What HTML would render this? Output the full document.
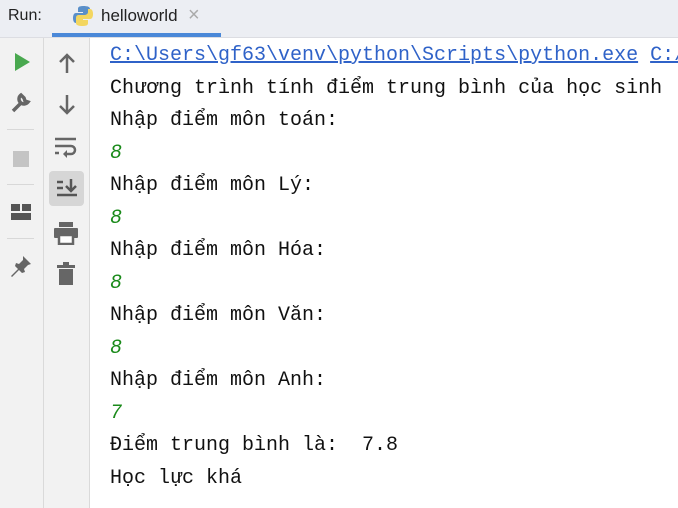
<!DOCTYPE html>
<html><head><meta charset="utf-8"><style>
body{margin:0;width:678px;height:508px;overflow:hidden;background:#fff;position:relative;font-family:"Liberation Sans",sans-serif}
.hdr{position:absolute;left:0;top:0;width:678px;height:37px;background:#eceef3;border-bottom:1px solid #dcdde2}
.run{position:absolute;left:8px;top:7px;font-size:16px;color:#222}
.tab{position:absolute;left:52px;top:0;width:169px;height:37px}
.tab .u{position:absolute;left:0;bottom:0;width:169px;height:4px;background:#4a88d8}
.tab .t{position:absolute;left:49px;top:6px;font-size:17px;color:#222}
.tab .x{position:absolute;left:136px;top:4px;font-size:20px;color:#aaa}
.c1{position:absolute;left:0;top:38px;width:43px;height:470px;background:#f2f2f2;border-right:1px solid #dadada}
.c2{position:absolute;left:44px;top:38px;width:45px;height:470px;background:#f2f2f2;border-right:1px solid #dadada}
.sep{position:absolute;left:7px;width:27px;height:1px;background:#d8d8d8}
.out{position:absolute;left:110px;top:40px;font-family:"Liberation Mono",monospace;font-size:20px;line-height:32.5px;color:#111;white-space:pre}
.lnk{color:#2f62c8;text-decoration:underline}
.g{color:#1a8a1a;font-style:italic}
svg{position:absolute}
</style></head><body>
<div class="hdr">
<div class="run">Run:</div>
<div class="tab">
<svg style="left:20px;top:5px" width="22" height="22" viewBox="0 0 22 22"><path d="M11 1c-5 0-5 2-5 3v3h5v1H4c-2 0-3 2-3 5s1 5 3 5h2v-3c0-2 2-3 4-3h5c2 0 3-1 3-3V4c0-2-2-3-7-3z" fill="#5a8fc9"/><path d="M11 21c5 0 5-2 5-3v-3h-5v-1h7c2 0 3-2 3-5s-1-5-3-5h-2v3c0 2-2 3-4 3H7c-2 0-3 1-3 3v5c0 2 2 3 7 3z" fill="#f3d660"/></svg>
<div class="t">helloworld</div><div class="x">×</div>
<div class="u"></div></div>
</div>
<div class="c1">
<svg style="left:12px;top:14px" width="20" height="20"><path d="M3 1L18 10L3 19Z" fill="#49a84f"/></svg>
<svg style="left:10px;top:54px" width="22" height="22"><path d="M3 19L12 10M11 3a5 5 0 1 0 7 7l-3-1-1-3z" stroke="#666" stroke-width="3.5" fill="none"/></svg>
<div class="sep" style="top:91px"></div>
<div style="position:absolute;left:13px;top:113px;width:16px;height:16px;background:#c4c4c4"></div>
<div class="sep" style="top:146px"></div>
<svg style="left:11px;top:166px" width="20" height="16"><rect x="0" y="0" width="9" height="7" fill="#555"/><rect x="11" y="0" width="9" height="7" fill="#555"/><rect x="0" y="9" width="20" height="7" fill="#555"/></svg>
<div class="sep" style="top:200px"></div>
<svg style="left:9px;top:216px" width="24" height="24"><path d="M14 2l8 8-3 1-4 4 1 3-3 1-3-3-7 7-1-1 7-7-3-3 1-3 3 1 4-4z" fill="#666"/></svg>
</div>
<div class="c2">
<svg style="left:13px;top:14px" width="20" height="22"><path d="M10 21V3M3 10l7-7 7 7" stroke="#666" stroke-width="2.5" fill="none"/></svg>
<svg style="left:13px;top:56px" width="20" height="22"><path d="M10 1v18M3 12l7 7 7-7" stroke="#666" stroke-width="2.5" fill="none"/></svg>
<svg style="left:10px;top:99px" width="24" height="22"><path d="M1 2h21M1 9h16a4 4 0 0 1 0 8h-6M1 16h4" stroke="#666" stroke-width="2.5" fill="none"/><path d="M9 17l4-4v8z" fill="#666"/></svg>
<div style="position:absolute;left:5px;top:133px;width:35px;height:35px;background:#d6d6d6;border-radius:4px"></div>
<svg style="left:12px;top:140px" width="22" height="22"><path d="M1 4h6M1 10h6M1 17h20M15 1v12M10 8l5 5 5-5" stroke="#555" stroke-width="2.5" fill="none"/></svg>
<svg style="left:10px;top:183px" width="24" height="24"><rect x="5" y="1" width="14" height="5" fill="#666"/><rect x="0" y="7" width="24" height="10" rx="1" fill="#666"/><rect x="5" y="14" width="14" height="9" fill="#fff" stroke="#666" stroke-width="2.5"/></svg>
<svg style="left:13px;top:224px" width="18" height="24"><rect x="0" y="3" width="18" height="3" fill="#666"/><rect x="6" y="0" width="6" height="3" fill="#666"/><rect x="2" y="7" width="14" height="16" fill="#666"/></svg>
</div>
<div class="out"><span class="lnk">C:\Users\gf63\venv\python\Scripts\python.exe</span> <span class="lnk">C:/</span>
Chương trình tính điểm trung bình của học sinh
Nhập điểm môn toán:
<span class="g">8</span>
Nhập điểm môn Lý:
<span class="g">8</span>
Nhập điểm môn Hóa:
<span class="g">8</span>
Nhập điểm môn Văn:
<span class="g">8</span>
Nhập điểm môn Anh:
<span class="g">7</span>
Điểm trung bình là:  7.8
Học lực khá</div>
</body></html>
